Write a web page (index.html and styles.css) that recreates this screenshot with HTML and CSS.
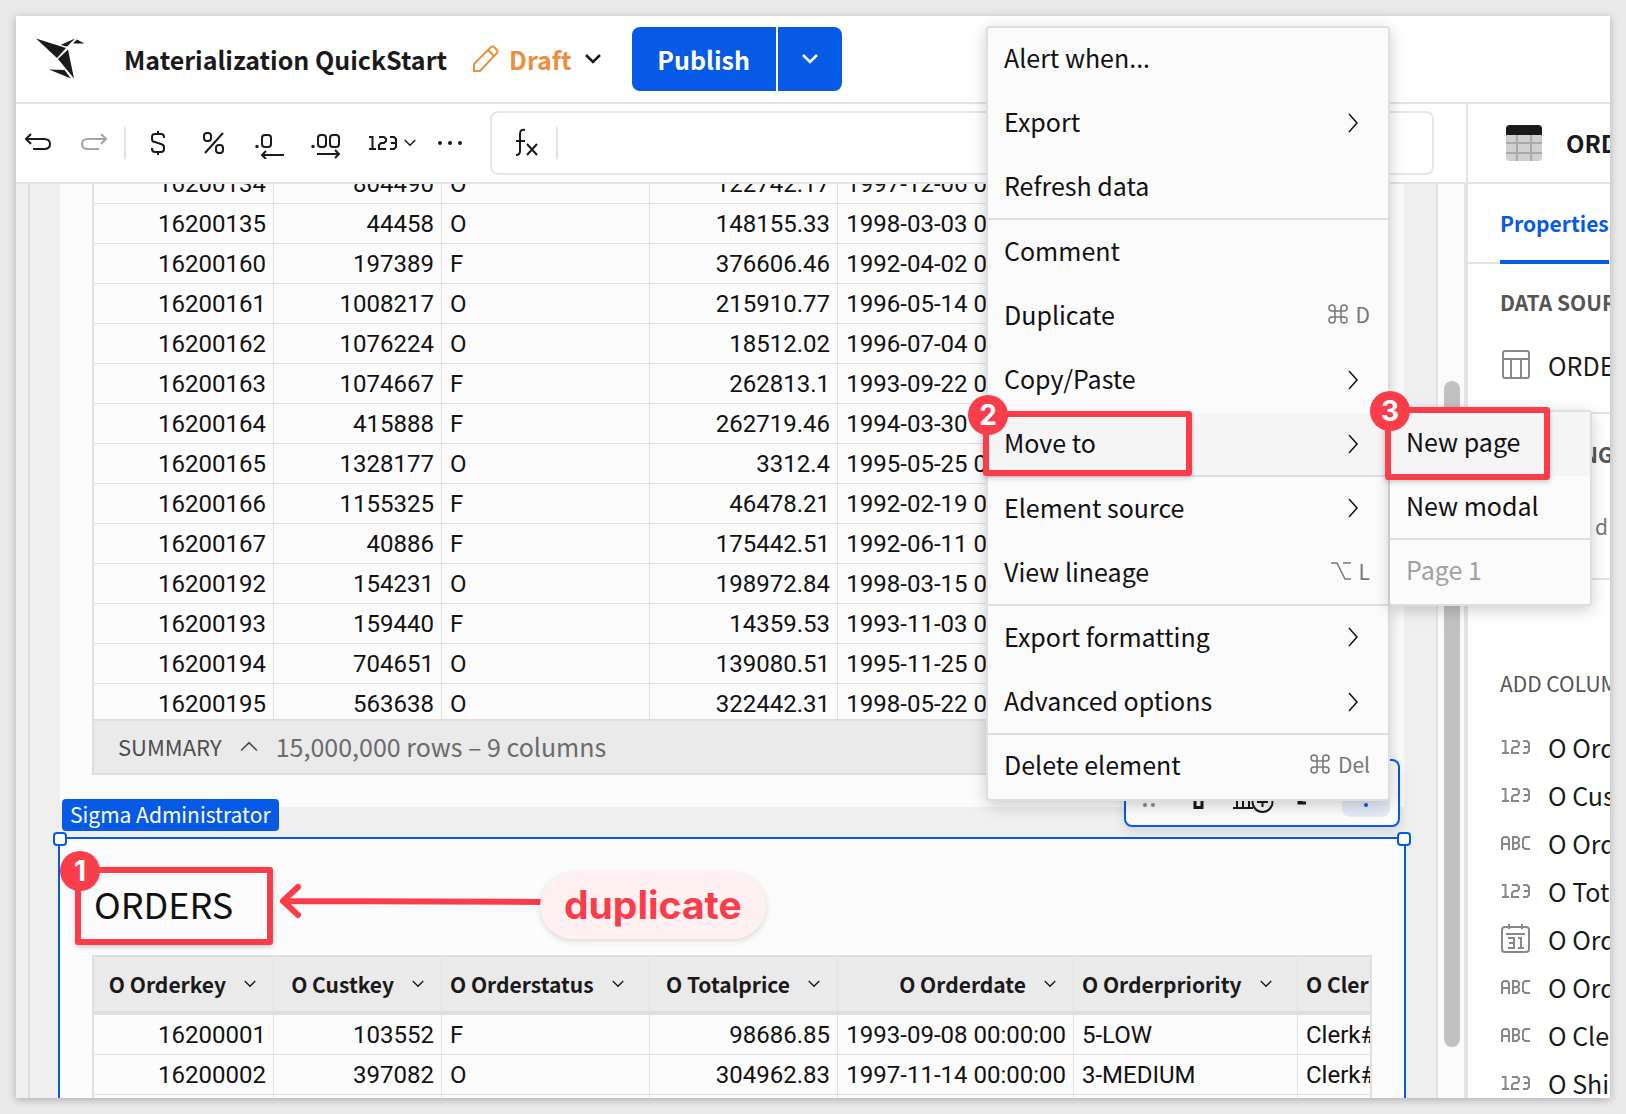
FILE: index.html
```html
<!DOCTYPE html>
<html lang="en">
<head>
<meta charset="utf-8">
<title>Materialization QuickStart</title>
<link rel="stylesheet" href="styles.css">
</head>
<body>
<svg class="sprite" aria-hidden="true">
  <symbol id="down" viewBox="0 0 16 10"><path d="M1 1l7 7 7-7"/></symbol>
  <symbol id="right" viewBox="0 0 12 20"><path d="M1 1l8 9-8 9"/></symbol>
  <symbol id="num" viewBox="0 0 30 18"><path d="M1 3h3.500v12M1 15h7M11 3h5l2 2v2l-2 2h-3l-2 2v4h7M22 3h4l2 2v8l-2 2h-4M23 9h5"/></symbol>
  <symbol id="abc" viewBox="0 0 30 18"><path d="M1 16V5l2-2h3l2 2v11M1 10h7M12 3h4l2 2v2l-2 2h-4zM12 9h5l1 2v2l-2 2h-4zM29 3h-5l-2 2v8l2 2h5"/></symbol>
  <symbol id="cmd" viewBox="0 0 20 20"><path d="M7 7h6v6H7zM7 7H4a3 3 0 1 1 3-3zM13 7V4a3 3 0 1 1 3 3zM13 13h3a3 3 0 1 1-3 3zM7 13v3a3 3 0 1 1-3-3z"/></symbol>
  <symbol id="opt" viewBox="0 0 20 20"><path d="M0 2h6l8 16h6M12 2h8"/></symbol>
</svg>

<div class="frame">
  <header class="header">
    <svg class="logo" viewBox="0 0 48 42" aria-label="Sigma"><path d="M0 .5L30 10l-9 10zM32 11.500l6 29-16-19.500zM24.500 7L39 .5l-8 8zM37 5.500L41 1.500l7.500 4zM13 31.500l15.500.5 6.500 8.500z"/></svg>
    <h1 class="title">Materialization QuickStart</h1>
    <button class="draft">
      <svg class="pencil" viewBox="0 0 26 28"><path d="M1 26v-7L18 2q2-1 3 0l3 3q1 1 0 3L7 26zM15 5l6 6"/></svg>
      <span>Draft</span>
      <svg class="chev bold"><use href="#down"/></svg>
    </button>
    <div class="publish">
      <button class="publish-main">Publish</button>
      <button class="publish-more" aria-label="Publish options"><svg class="chev bold"><use href="#down"/></svg></button>
    </div>
  </header>

  <div class="body">
    <div class="left">
      <div class="toolbar">
        <div class="history">
          <button aria-label="Undo"><svg width="28" height="20" viewBox="0 0 28 20"><path d="M7 1L2 6l5 5M2 6h18q6 0 6 5t-6 5H9"/></svg></button>
          <button class="off" aria-label="Redo"><svg width="28" height="20" viewBox="0 0 28 20"><path d="M21 1l5 5-5 5M26 6H8q-6 0-6 5t6 5h11"/></svg></button>
        </div>
        <span class="rule"></span>
        <div class="tools">
          <button class="tool" aria-label="Currency"><svg width="14" height="24" viewBox="0 0 14 24"><path d="M13 7V6q0-3-3-3H4Q1 3 1 6v2q0 3 3 3l6 2q3 1 3 3v2q0 3-3 3H4q-3 0-3-3v-1M7 0v3M7 21v3"/></svg></button>
          <button class="tool" aria-label="Percent"><svg width="22" height="24" viewBox="0 0 22 24"><path d="M20 2L2 22"/><rect x="1" y="2" width="7" height="8" rx="3"/><rect x="13" y="14" width="7" height="8" rx="3"/></svg></button>
          <button class="tool" aria-label="Decrease decimals"><svg width="30" height="32" viewBox="0 0 30 32"><circle class="solid" cx="2" cy="19.500" r="1.700"/><rect x="7" y="8" width="9" height="12" rx="3"/><path d="M29 28H7M11 24l-4 4 4 4"/></svg></button>
          <button class="tool" aria-label="Increase decimals"><svg width="30" height="32" viewBox="0 0 30 32"><circle class="solid" cx="2" cy="19.500" r="1.700"/><rect x="7" y="8" width="8" height="12" rx="3"/><rect x="19" y="8" width="9" height="12" rx="3"/><path d="M6 27h22M24 23l4 4-4 4"/></svg></button>
          <button class="tool wide" aria-label="Number format"><svg class="num"><use href="#num"/></svg><svg class="chev tiny"><use href="#down"/></svg></button>
          <button class="tool" aria-label="More"><svg width="26" height="6" viewBox="0 0 26 6"><g class="solid"><circle cx="3" cy="3" r="2"/><circle cx="13" cy="3" r="2"/><circle cx="23" cy="3" r="2"/></g></svg></button>
        </div>
        <label class="formula"><svg width="24" height="32" viewBox="0 0 24 32"><path d="M9 3q-5-1-5 4v17q0 4-4 4M0 14h9M11 17l10 11M21 17L11 28"/></svg><span class="rule"></span><input class="formula-input" type="text" aria-label="Formula"></label>
      </div>
      <main class="canvas">
        <div class="pages">
          <section class="page first">
            <div class="rows">
              <table class="grid scrolled">
                <colgroup><col class="c1"><col class="c2"><col class="c3"><col class="c4"><col class="c5"><col class="c6"><col class="c7"></colgroup>
                <tbody>
                <tr><td>16200134</td><td>804490</td><td class="t">O</td><td>122742.17</td><td>1997-12-06 00:00:00</td><td></td><td></td></tr>
                <tr><td>16200135</td><td>44458</td><td class="t">O</td><td>148155.33</td><td>1998-03-03 00:00:00</td><td></td><td></td></tr>
                <tr><td>16200160</td><td>197389</td><td class="t">F</td><td>376606.46</td><td>1992-04-02 00:00:00</td><td></td><td></td></tr>
                <tr><td>16200161</td><td>1008217</td><td class="t">O</td><td>215910.77</td><td>1996-05-14 00:00:00</td><td></td><td></td></tr>
                <tr><td>16200162</td><td>1076224</td><td class="t">O</td><td>18512.02</td><td>1996-07-04 00:00:00</td><td></td><td></td></tr>
                <tr><td>16200163</td><td>1074667</td><td class="t">F</td><td>262813.1</td><td>1993-09-22 00:00:00</td><td></td><td></td></tr>
                <tr><td>16200164</td><td>415888</td><td class="t">F</td><td>262719.46</td><td>1994-03-30 00:00:00</td><td></td><td></td></tr>
                <tr><td>16200165</td><td>1328177</td><td class="t">O</td><td>3312.4</td><td>1995-05-25 00:00:00</td><td></td><td></td></tr>
                <tr><td>16200166</td><td>1155325</td><td class="t">F</td><td>46478.21</td><td>1992-02-19 00:00:00</td><td></td><td></td></tr>
                <tr><td>16200167</td><td>40886</td><td class="t">F</td><td>175442.51</td><td>1992-06-11 00:00:00</td><td></td><td></td></tr>
                <tr><td>16200192</td><td>154231</td><td class="t">O</td><td>198972.84</td><td>1998-03-15 00:00:00</td><td></td><td></td></tr>
                <tr><td>16200193</td><td>159440</td><td class="t">F</td><td>14359.53</td><td>1993-11-03 00:00:00</td><td></td><td></td></tr>
                <tr><td>16200194</td><td>704651</td><td class="t">O</td><td>139080.51</td><td>1995-11-25 00:00:00</td><td></td><td></td></tr>
                <tr><td>16200195</td><td>563638</td><td class="t">O</td><td>322442.31</td><td>1998-05-22 00:00:00</td><td></td><td></td></tr>
                </tbody>
              </table>
            </div>
            <div class="summary"><button class="summary-toggle">SUMMARY <svg class="chev up"><use href="#down"/></svg></button><span>15,000,000 rows – 9 columns</span></div>
          </section>

          <section class="page selected">
            <span class="owner">Sigma Administrator</span>
            <i class="handle nw"></i><i class="handle ne"></i>
            <div class="element-bar">
              <svg width="20" height="28" viewBox="0 0 20 28"><g class="dots"><circle cx="2" cy="2" r="2"/><circle cx="10" cy="2" r="2"/><circle cx="2" cy="14" r="2"/><circle cx="10" cy="14" r="2"/><circle cx="2" cy="26" r="2"/><circle cx="10" cy="26" r="2"/></g></svg>
              <button aria-label="Filter"><svg width="24" height="32" viewBox="0 0 24 32"><path class="thick" d="M1 4h22l-7 9v17.500H9V13z"/></svg></button>
              <button aria-label="Add chart"><svg width="41" height="40" viewBox="0 0 41 40"><path d="M0 35h20M4 35V20M10 35V12M16 35V16"/><circle cx="29.500" cy="29" r="10"/><path d="M29.500 24v10M24 29h11"/></svg></button>
              <button aria-label="Expand"><svg width="22" height="24" viewBox="0 0 22 24"><path class="thick" d="M13 2h7v7M20 2L2 22M9 22H2v-7"/></svg></button>
              <button class="active" aria-label="More"><svg width="6" height="28" viewBox="0 0 6 28"><circle cx="3" cy="2" r="2"/><circle cx="3" cy="14" r="2"/><circle cx="3" cy="26" r="2"/></svg></button>
            </div>
            <h2 class="orders">ORDERS</h2>
            <div class="rows cut">
              <table class="grid">
                <colgroup><col class="c1"><col class="c2"><col class="c3"><col class="c4"><col class="c5"><col class="c6"><col class="c7"></colgroup>
                <thead><tr>
                  <th><span class="th">O Orderkey<svg class="chev tiny"><use href="#down"/></svg></span></th>
                  <th><span class="th">O Custkey<svg class="chev tiny"><use href="#down"/></svg></span></th>
                  <th class="t"><span class="th">O Orderstatus<svg class="chev tiny"><use href="#down"/></svg></span></th>
                  <th><span class="th">O Totalprice<svg class="chev tiny"><use href="#down"/></svg></span></th>
                  <th><span class="th">O Orderdate<svg class="chev tiny"><use href="#down"/></svg></span></th>
                  <th class="t"><span class="th">O Orderpriority<svg class="chev tiny"><use href="#down"/></svg></span></th>
                  <th class="t"><span class="th">O Cler</span></th>
                </tr></thead>
                <tbody>
                <tr><td>16200001</td><td>103552</td><td class="t">F</td><td>98686.85</td><td>1993-09-08 00:00:00</td><td class="t">5-LOW</td><td class="t">Clerk#</td></tr>
                <tr><td>16200002</td><td>397082</td><td class="t">O</td><td>304962.83</td><td>1997-11-14 00:00:00</td><td class="t">3-MEDIUM</td><td class="t">Clerk#</td></tr>
                <tr><td></td><td></td><td class="t"></td><td></td><td></td><td></td><td></td></tr>
                </tbody>
              </table>
            </div>
          </section>
        </div>
        <div class="scroll"><span class="thumb"></span></div>
      </main>
    </div>

    <aside class="side">
      <div class="side-head">
        <svg class="table-icon" viewBox="0 0 36 36"><rect class="sheet" width="36" height="36" rx="4"/><path class="lines" d="M11 10v26M25 10v26M0 18h36M0 28h36"/><path class="cap" d="M0 10V4q0-4 4-4h28q4 0 4 4v6z"/></svg>
        <h2>ORDERS</h2>
      </div>
      <nav class="tabs"><a class="tab" href="#">Properties</a></nav>
      <section class="block source"><h3>DATA SOURCE</h3>
        <div class="src"><svg class="src-icon" viewBox="0 0 28 30"><rect x="1" y="1" width="26" height="27" rx="2"/><path d="M1 9h26M9 9v19M19 9v19"/></svg><span>ORDERS</span></div></section>
      <section class="block group"><h3>NG</h3><p>d</p></section>
      <h3 class="add">ADD COLUMNS</h3>
      <ul class="cols">
        <li><svg class="type"><use href="#num"/></svg>O Orderkey</li>
        <li><svg class="type"><use href="#num"/></svg>O Custkey</li>
        <li><svg class="type"><use href="#abc"/></svg>O Orderstatus</li>
        <li><svg class="type"><use href="#num"/></svg>O Totalprice</li>
        <li><svg class="cal" viewBox="0 0 30 30"><rect x="1" y="3" width="27" height="25" rx="3"/><path d="M8 0v5M21 0v5M5 10h19M7 14h6v10H7M8 19h5M17 14h3v10M17 24h6"/></svg>O Orderdate</li>
        <li><svg class="type"><use href="#abc"/></svg>O Orderpriority</li>
        <li><svg class="type"><use href="#abc"/></svg>O Clerk</li>
        <li><svg class="type"><use href="#num"/></svg>O Shippriority</li>
      </ul>
    </aside>
  </div>
</div>

<div class="menu main-menu">
  <button>Alert when...</button>
  <button>Export<svg class="arrow"><use href="#right"/></svg></button>
  <button>Refresh data</button>
  <hr>
  <button>Comment</button>
  <button>Duplicate<kbd><svg class="key"><use href="#cmd"/></svg>D</kbd></button>
  <button>Copy/Paste<svg class="arrow"><use href="#right"/></svg></button>
  <button class="hot">Move to<svg class="arrow"><use href="#right"/></svg></button>
  <hr>
  <button>Element source<svg class="arrow"><use href="#right"/></svg></button>
  <button>View lineage<kbd><svg class="key"><use href="#opt"/></svg>L</kbd></button>
  <hr>
  <button>Export formatting<svg class="arrow"><use href="#right"/></svg></button>
  <button>Advanced options<svg class="arrow"><use href="#right"/></svg></button>
  <hr>
  <button>Delete element<kbd><svg class="key"><use href="#cmd"/></svg>Del</kbd></button>
</div>
<div class="menu sub-menu">
  <button class="hot">New page</button>
  <button>New modal</button>
  <hr>
  <button disabled>Page 1</button>
</div>

<div class="mark m1"><b>1</b></div>
<div class="mark m2"><b>2</b></div>
<div class="mark m3"><b>3</b></div>
<svg class="pointer" viewBox="0 0 270 40"><path d="M267 21L5 20M20 6L5 20l15 14"/></svg>
<div class="callout">duplicate</div>
</body>
</html>
```
FILE: styles.css
```css
* { box-sizing: border-box; }
html, body { height: 100%; }
body {
  margin: 0;
  padding: 16px;
  background: #e9e9e9;
  color: #1a1a1a;
  font: 25px/32px "Noto Sans CJK SC", "Open Sans", sans-serif;
  overflow: hidden;
  position: relative;
}
h1, h2, h3, p, ul { margin: 0; padding: 0; font-size: inherit; list-style: none; }
button { font: inherit; color: inherit; border: 0; background: none; padding: 0; margin: 0; display: flex; align-items: center; }
svg { flex: none; fill: none; stroke: currentColor; stroke-width: 2; display: block; }
.sprite { position: absolute; width: 0; height: 0; }
.chev { width: 16px; height: 10px; }
.chev.bold { stroke-width: 2.5; }
.chev.tiny { width: 12px; height: 8px; stroke-width: 2; }

.frame {
  height: 100%;
  display: flex;
  flex-direction: column;
  background: #fff;
  overflow: hidden;
  box-shadow: 0 2px 8px rgba(0, 0, 0, .25);
}
.header { flex: none; height: 88px; border-bottom: 2px solid #e3e3e3; display: flex; align-items: center; padding-left: 20px; }
.logo { width: 48px; height: 42px; fill: #1a1a1a; stroke: none; }
.title { margin-left: 40px; font-weight: 700; white-space: nowrap; }
.draft { margin-left: 26px; color: #ed8e3b; font-weight: 700; }
.draft span { margin: 0 13px 0 10px; }
.draft .chev { color: #1a1a1a; }
.pencil { width: 26px; height: 28px; }
.publish { margin-left: 31px; display: flex; gap: 2px; color: #fff; font-weight: 700; }
.publish button { height: 64px; background: #065ae6; justify-content: center; }
.publish-main { width: 144px; border-radius: 8px 0 0 8px; }
.publish-more { width: 64px; border-radius: 0 8px 8px 0; }

.body { flex: 1; min-height: 0; display: flex; }
.left { flex: 1; min-width: 0; display: flex; flex-direction: column; }
.toolbar { flex: none; height: 80px; border-bottom: 2px solid #e3e3e3; display: flex; align-items: center; padding: 0 32px 0 8px; }
.history { display: flex; gap: 28px; padding-right: 16px; }
.tools { display: flex; align-items: center; padding: 0 12px 0 4px; }
.tool { width: 56px; flex: none; justify-content: center; }
.off { color: #a5a5a5; }
.rule { width: 2px; height: 32px; background: #e3e3e3; flex: none; }
.num, .type { width: 30px; height: 18px; }
.wide { width: 68px; gap: 6px; padding-left: 8px; }
.solid { fill: currentColor; stroke: none; }
.formula { flex: 1; height: 64px; border: 2px solid #e6e6e6; border-radius: 8px; display: flex; align-items: center; padding-left: 24px; gap: 16px; }
.formula-input { flex: 1; min-width: 0; border: 0; outline: 0; background: none; font: inherit; }

.canvas { flex: 1; min-height: 0; display: flex; background: #efefef; }
.pages { flex: 1; min-width: 0; margin-left: 12px; padding: 0 32px 0 30px; border-left: 2px solid #dedede; display: flex; flex-direction: column; }
.page { flex: none; background: #fcfcfc; padding: 0 32px; }
.first { height: 623px; }
.rows { height: 535px; overflow: hidden; border: solid #dedede; border-width: 0 2px; }
.grid { table-layout: fixed; width: 1424px; border-collapse: separate; border-spacing: 0; }
.scrolled { margin-top: -20px; }
.c1 { width: 180px; } .c2 { width: 168px; } .c3 { width: 208px; } .c4 { width: 188px; }
.c5 { width: 236px; } .c6 { width: 224px; } .c7 { width: 220px; }
td, th { height: 40px; padding: 0 7px; border: solid #e1e1e1; border-width: 0 1px 1px 0; text-align: right; white-space: nowrap; overflow: hidden; }
td { font: 24px/38px Roboto, sans-serif; color: #111; }
.t { text-align: left; padding-left: 8px; }
th { height: 58px; background: #eaeaea; border-bottom: 4px solid #dedede; font-weight: 700; font-size: 21px; padding-right: 17px; }
.th { display: inline-flex; align-items: center; gap: 18px; }
.summary { height: 56px; background: #eaeaea; border: 2px solid #dedede; display: flex; align-items: center; gap: 18px; padding: 0 24px 3px; color: #6b6b6b; }
.summary-toggle { font-size: 22px; gap: 18px; color: #4d4d4d; }
.up { width: 18px; height: 12px; stroke-width: 1.5; transform: rotate(180deg); }

.selected { position: relative; margin: 30px -2px 0; flex: 1; border: solid #065ae6; border-width: 2px 2px 0; }
.owner { position: absolute; left: 2px; top: -40px; height: 32px; padding: 0 8px; border-radius: 4px; background: #065ae6; color: #fff; font-size: 21px; line-height: 30px; white-space: nowrap; }
.handle { position: absolute; top: -7px; width: 14px; height: 14px; border: 2px solid #065ae6; border-radius: 4px; background: #fff; }
.nw { left: -7px; }
.ne { right: -7px; }
.element-bar { position: absolute; right: 4px; top: -80px; width: 276px; height: 68px; border: 2px solid #065ae6; border-radius: 8px; background: #fcfcfc; display: flex; align-items: center; gap: 23px; padding-left: 17px; box-shadow: 0 4px 12px rgba(0, 0, 0, .12); }
.active { width: 48px; height: 48px; justify-content: center; background: #e3ebf8; border-radius: 8px; }
.active svg { fill: #065ae6; stroke: none; }
.thick { stroke-width: 3; }
.dots { fill: #888; stroke: none; }
.orders { height: 116px; padding: 38px 0 0 2px; font-size: 36px; line-height: 52px; font-weight: 400; color: #111; }
.cut { height: 143px; border-top-width: 2px; }

.scroll { width: 30px; border: solid #e3e3e3; border-width: 0 2px; background: #fafafa; padding: 197px 4px 51px 6px; display: flex; }
.thumb { flex: 1; border-radius: 8px; background: #c1c1c1; }

.side { width: 144px; flex: none; border-left: 2px solid #e3e3e3; overflow: hidden; white-space: nowrap; }
.side-head { height: 80px; border-bottom: 2px solid #e3e3e3; display: flex; align-items: center; gap: 24px; padding-left: 38px; font-size: 24px; }
.table-icon { width: 36px; height: 36px; stroke: #aaa; }
.sheet { fill: #d0d0d0; stroke: none; }
.cap { fill: #1a1a1a; stroke: none; }
.tabs { height: 80px; border-bottom: 2px solid #e3e3e3; padding-left: 32px; display: flex; }
.tab { height: 80px; border-bottom: 4px solid #065ae6; color: #065ae6; font-size: 21px; font-weight: 700; line-height: 78px; text-decoration: none; }
.block { border-bottom: 2px solid #e3e3e3; padding-left: 32px; }
.block h3 { font-size: 21px; color: #555; }
.source { height: 150px; padding-top: 22px; }
.src { display: flex; align-items: center; gap: 18px; margin-top: 31px; padding-left: 2px; }
.src-icon { width: 28px; height: 30px; color: #888; }
.group { height: 166px; padding-top: 24px; text-align: right; }
.group h3 { margin-right: -3px; }
.group p { margin-top: 40px; padding-right: 2px; font-size: 21px; color: #777; }
.add { margin: 87px 0 24px 32px; font-size: 21px; font-weight: 400; color: #555; }
.cols { padding-left: 33px; }
.cols li { height: 48px; display: flex; align-items: center; gap: 17px; }
.cols svg { color: #888; }
.cal { width: 30px; height: 30px; }

.menu { position: absolute; background: #fbfbfb; border: 2px solid #dedede; border-radius: 4px; box-shadow: 0 4px 16px rgba(0, 0, 0, .2); color: #111; }
.main-menu { left: 986px; top: 26px; width: 404px; }
.sub-menu { left: 1390px; top: 410px; width: 202px; border-left-width: 0; }
.menu button { width: 100%; height: 64px; padding: 0 18px 6px 16px; justify-content: space-between; white-space: nowrap; }
.menu hr { margin: -2px 0 0; border: 0; height: 2px; background: #dedede; position: relative; }
.menu hr + button { height: 65px; }
.menu button:last-child { height: 64px; }
.menu .hot { background: #f5f5f5; }
.menu button:disabled { color: #a0a0a0; }
.arrow { width: 12px; height: 20px; margin: 3px 10px 0 0; stroke-width: 1.5; }
.key { width: 20px; height: 20px; stroke-width: 1.5; }
kbd { display: flex; align-items: center; gap: 8px; font: inherit; font-size: 21px; color: #777; }

.mark { position: absolute; border: 6px solid #f93d4a; border-radius: 3px; box-shadow: 0 2px 5px rgba(0, 0, 0, .2); }
.mark b { position: absolute; left: -21px; top: -22px; width: 40px; height: 40px; border-radius: 50%; background: #f93d4a; color: #fff; text-align: center; font: 700 28px/40px Inter, sans-serif; }
.m1 { left: 75px; top: 867px; width: 198px; height: 78px; }
.m2 { left: 983px; top: 411px; width: 209px; height: 65px; }
.m3 { left: 1385px; top: 407px; width: 165px; height: 73px; }
.pointer { position: absolute; left: 278px; top: 881px; width: 270px; height: 40px; stroke: #f93d4a; stroke-width: 6; stroke-linecap: round; stroke-linejoin: round; }
.callout { position: absolute; left: 540px; top: 873px; height: 66px; padding: 0 24px; border-radius: 33px; background: #fff1f1; color: #f93d4a; font: 700 39px/64px Inter, sans-serif; box-shadow: 0 2px 6px rgba(0, 0, 0, .15); }
```
